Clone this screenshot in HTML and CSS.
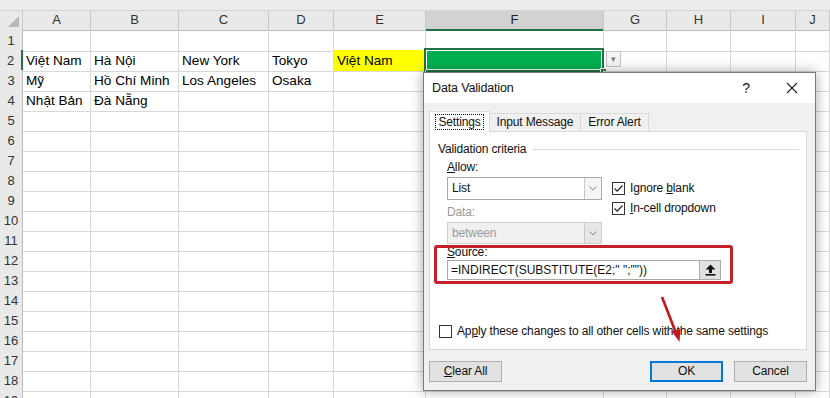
FILE: index.html
```html
<!DOCTYPE html>
<html lang="vi">
<head>
<meta charset="utf-8">
<title>Data Validation - INDIRECT</title>
<link rel="stylesheet" href="styles.css">
</head>
<body>
<div class="topbar"></div>
<div class="sheet">
  <div class="row head">
    <span class="corner"></span><span>A</span><span>B</span><span>C</span><span>D</span><span>E</span><span class="sel">F</span><span>G</span><span>H</span><span>I</span><span>J</span>
  </div>
  <div class="row"><span class="rh">1</span><span></span><span></span><span></span><span></span><span></span><span></span><span></span><span></span><span></span><span></span></div>
  <div class="row">
    <span class="rh act">2</span><span>Việt Nam</span><span>Hà Nội</span><span>New York</span><span>Tokyo</span><span class="yellow">Việt Nam</span>
    <span class="active"><b class="cursor"><i class="handle"></i></b></span>
    <span class="dd-cell"><b class="dd">&#9662;</b></span><span></span><span></span><span></span>
  </div>
  <div class="row"><span class="rh">3</span><span>Mỹ</span><span>Hồ Chí Minh</span><span>Los Angeles</span><span>Osaka</span><span></span><span></span><span></span><span></span><span></span><span></span></div>
  <div class="row"><span class="rh">4</span><span>Nhật Bản</span><span>Đà Nẵng</span><span></span><span></span><span></span><span></span><span></span><span></span><span></span><span></span></div>
  <div class="row"><span class="rh">5</span><span></span><span></span><span></span><span></span><span></span><span></span><span></span><span></span><span></span><span></span></div>
  <div class="row"><span class="rh">6</span><span></span><span></span><span></span><span></span><span></span><span></span><span></span><span></span><span></span><span></span></div>
  <div class="row"><span class="rh">7</span><span></span><span></span><span></span><span></span><span></span><span></span><span></span><span></span><span></span><span></span></div>
  <div class="row"><span class="rh">8</span><span></span><span></span><span></span><span></span><span></span><span></span><span></span><span></span><span></span><span></span></div>
  <div class="row"><span class="rh">9</span><span></span><span></span><span></span><span></span><span></span><span></span><span></span><span></span><span></span><span></span></div>
  <div class="row"><span class="rh">10</span><span></span><span></span><span></span><span></span><span></span><span></span><span></span><span></span><span></span><span></span></div>
  <div class="row"><span class="rh">11</span><span></span><span></span><span></span><span></span><span></span><span></span><span></span><span></span><span></span><span></span></div>
  <div class="row"><span class="rh">12</span><span></span><span></span><span></span><span></span><span></span><span></span><span></span><span></span><span></span><span></span></div>
  <div class="row"><span class="rh">13</span><span></span><span></span><span></span><span></span><span></span><span></span><span></span><span></span><span></span><span></span></div>
  <div class="row"><span class="rh">14</span><span></span><span></span><span></span><span></span><span></span><span></span><span></span><span></span><span></span><span></span></div>
  <div class="row"><span class="rh">15</span><span></span><span></span><span></span><span></span><span></span><span></span><span></span><span></span><span></span><span></span></div>
  <div class="row"><span class="rh">16</span><span></span><span></span><span></span><span></span><span></span><span></span><span></span><span></span><span></span><span></span></div>
  <div class="row"><span class="rh">17</span><span></span><span></span><span></span><span></span><span></span><span></span><span></span><span></span><span></span><span></span></div>
  <div class="row"><span class="rh">18</span><span></span><span></span><span></span><span></span><span></span><span></span><span></span><span></span><span></span><span></span></div>
  <div class="row"><span class="rh">19</span><span></span><span></span><span></span><span></span><span></span><span></span><span></span><span></span><span></span><span></span></div>
</div>

<div class="dlg">
  <div class="dlg-title">
    <span class="dlg-name">Data Validation</span>
    <span class="help">?</span>
    <span class="close"><svg width="12" height="12" viewBox="0 0 12 12"><path d="M1 1L11 11M11 1L1 11" stroke="#222" stroke-width="1.1"/></svg></span>
  </div>
  <div class="dlg-body">
    <div class="tabs">
      <span class="tab on"><span class="focus">Settings</span></span>
      <span class="tab w2">Input Message</span>
      <span class="tab w3">Error Alert</span>
    </div>
    <div class="panel">
      <div class="legend">Validation criteria</div>
      <div class="criteria">
        <div class="col-left">
          <div class="lbl"><u>A</u>llow:</div>
          <div class="combo"><span class="val">List</span><span class="arr"><svg width="8" height="5" viewBox="0 0 8 5"><path d="M0.5 0.5L4 4L7.5 0.5" fill="none" stroke="#888"/></svg></span></div>
          <div class="lbl off">Data:</div>
          <div class="combo dis"><span class="val">between</span><span class="arr"><svg width="8" height="5" viewBox="0 0 8 5"><path d="M0.5 0.5L4 4L7.5 0.5" fill="none" stroke="#888"/></svg></span></div>
        </div>
        <div class="col-right">
          <div class="chk"><span class="box"><svg width="11" height="11" viewBox="0 0 11 11"><path d="M1.5 5.5L4.2 8.2L9.5 2.5" fill="none" stroke="#222" stroke-width="1.2"/></svg></span><span>Ignore <u>b</u>lank</span></div>
          <div class="chk"><span class="box"><svg width="11" height="11" viewBox="0 0 11 11"><path d="M1.5 5.5L4.2 8.2L9.5 2.5" fill="none" stroke="#222" stroke-width="1.2"/></svg></span><span><u>I</u>n-cell dropdown</span></div>
        </div>
      </div>
      <div class="source">
        <div class="lbl"><u>S</u>ource:</div>
        <div class="src-input"><span class="val">=INDIRECT(SUBSTITUTE(E2;" ";""))</span><span class="pick"><svg width="11" height="12" viewBox="0 0 11 12"><path d="M5.5 0.5L10.5 5.5H7V9H4V5.5H0.5Z" fill="#111"/><rect x="0.5" y="10" width="10" height="1.6" fill="#111"/></svg></span></div>
        <div class="mark"></div>
      </div>
      <div class="chk apply"><span class="box"></span><span>Ap<u>p</u>ly these changes to all other cells with the same settings</span></div>
    </div>
    <div class="btns">
      <span class="btn"><u>C</u>lear All</span>
      <span class="btn ok">OK</span>
      <span class="btn">Cancel</span>
    </div>
  </div>
</div>

<svg class="arrow" width="40" height="60" viewBox="0 0 40 60">
  <path d="M12 7L26 43" stroke="#c8141c" stroke-width="2.6"/>
  <path d="M21.5 41L29.5 52L30.5 39Z" fill="#c8141c"/>
</svg>
</body>
</html>
```

FILE: styles.css
```css
html,body{ margin:0; padding:0;}
body{ width:830px; height:398px; overflow:hidden; background:#fff; position:relative; font-family:"Liberation Sans",Arial,sans-serif; color:#000;}

.topbar{ height:10px; background:#ececec; border-bottom:1px solid #d4d4d4;}

.row{ display:grid; grid-template-columns:23px 68px 88px 90px 65px 92px 178px 63px 64px 65px 1fr; height:20px;}
.row span{ box-sizing:border-box; border-right:1px solid #d8d8d8; border-bottom:1px solid #d8d8d8; font-size:13.6px; line-height:20px; padding:1px 0 0 3px; white-space:nowrap; position:relative;}
.row .rh{ background:#e9e9e9; border-right-color:#bdbdbd; border-bottom-color:#c8c8c8; color:#333; text-align:center; padding:1px 0 0 0; font-size:13px;}
.row .rh.act{ border-right:2px solid #217346;}

.head{ height:19px;}
.head span{ background:#e9e9e9; border-right-color:#c8c8c8; border-bottom-color:#bdbdbd; text-align:center; color:#333; line-height:18px; padding:0; font-size:13px;}
.head .sel{ background:#d2d2d2; border-bottom:2px solid #217346; color:#222;}
.head .corner:after{ content:""; position:absolute; right:3px; bottom:3px; border-left:11px solid transparent; border-bottom:11px solid #b9b9b9;}

.row .yellow{ background:#ffff00;}
.row .active{ background:#00b050;}
.cursor{ position:absolute; left:-2px; top:-2px; right:-1px; bottom:-1px; border:2px solid #217346; box-shadow:inset 0 0 0 1px #fff;}
.handle{ position:absolute; right:-5px; bottom:-5px; width:5px; height:5px; background:#217346; border:1px solid #fff;}
.dd{ position:absolute; left:2px; top:1px; width:15px; height:16px; box-sizing:border-box; border:1px solid #c4c4c4; background:#f4f4f4; color:#777; font-size:9px; line-height:15px; text-align:center; font-weight:normal;}

/* dialog */
.dlg{ position:absolute; left:423px; top:72px; width:393px; height:319px; box-sizing:border-box; border:1px solid #7a7a7a; background:#f0f0f0; box-shadow:0 0 12px rgba(0,0,0,.35); display:flex; flex-direction:column; font-size:12px; letter-spacing:-0.15px; color:#111;}
.dlg-title{ height:30px; background:#fff; display:flex; align-items:center; padding-left:8px; font-size:12.5px;}
.dlg-name{ flex:1;}
.help,.close{ width:46px; text-align:center; font-size:14px; color:#222;}
.close svg{ display:block; margin:0 auto;}
.dlg-body{ flex:1; padding:8px 8px 8px 5px; display:flex; flex-direction:column;}

.tabs{ display:flex; align-items:flex-end; height:20px;}
.tab{ box-sizing:border-box; height:18px; line-height:17px; border:1px solid #d9d9d9; border-bottom:none; text-align:center; width:92px; margin-right:-1px;}
.tab.on{ width:61px; height:21px; background:#fff; margin-bottom:-1px; position:relative; z-index:1; padding-top:2px;}
.tab.w3{ width:69px;}
.focus{ outline:1px dotted #111; padding:0 2px; line-height:14px; display:inline-block;}

.panel{ height:219px; box-sizing:border-box; background:#fff; border:1px solid #d9d9d9; padding:9px 7px 8px 8px; display:flex; flex-direction:column;}
.legend{ display:flex; align-items:center; height:16px;}
.legend:after{ content:""; flex:1; border-top:1px solid #dcdcdc; margin-left:7px;}

.criteria{ display:flex; margin-left:9px; margin-top:3px;}
.col-left{ width:155px;}
.lbl{ height:15px; line-height:15px;}
.lbl.off{ color:#999; margin-top:5px;}
.combo{ height:23px; box-sizing:border-box; border:1px solid #a9a9a9; background:#fff; display:flex; margin-top:2px;}
.combo .val{ flex:1; line-height:21px; padding-left:4px;}
.combo .arr{ width:16px; border-left:1px solid #c8c8c8; background:#f5f5f5; display:flex; align-items:center; justify-content:center;}
.combo.dis{ background:#f0f0f0; border-color:#cfcfcf; color:#9a9a9a; height:22px;}
.combo.dis .arr{ background:#e6e6e6;}

.col-right{ margin-left:10px; margin-top:18px;}
.chk{ display:flex; align-items:center; height:20px;}
.box{ width:13px; height:13px; box-sizing:border-box; border:1px solid #333; background:#fff; margin-right:5px; display:flex; align-items:center; justify-content:center;}

.source{ position:relative; margin-left:9px; margin-top:1px;}
.src-input{ width:274px; height:20px; box-sizing:border-box; border:1px solid #a9a9a9; display:flex;}
.src-input .val{ flex:1; line-height:18px; padding-left:3px; white-space:nowrap; letter-spacing:0;}
.pick{ width:20px; background:#e1e1e1; border-left:1px solid #adadad; display:flex; align-items:center; justify-content:center;}
.mark{ position:absolute; left:-13px; top:0; width:293px; height:33px; border:3px solid #c51f2a; border-radius:3px;}

.apply{ margin-top:auto; margin-left:1px;}

.btns{ display:flex; margin-top:11px; height:21px;}
.btn{ width:73px; box-sizing:border-box; background:#e1e1e1; border:1px solid #adadad; text-align:center; line-height:19px;}
.btn.ok{ margin-left:auto; border:2px solid #0078d7; line-height:17px;}
.btn + .btn + .btn{ margin-left:11px;}

.arrow{ position:absolute; left:650px; top:290px;}
```
